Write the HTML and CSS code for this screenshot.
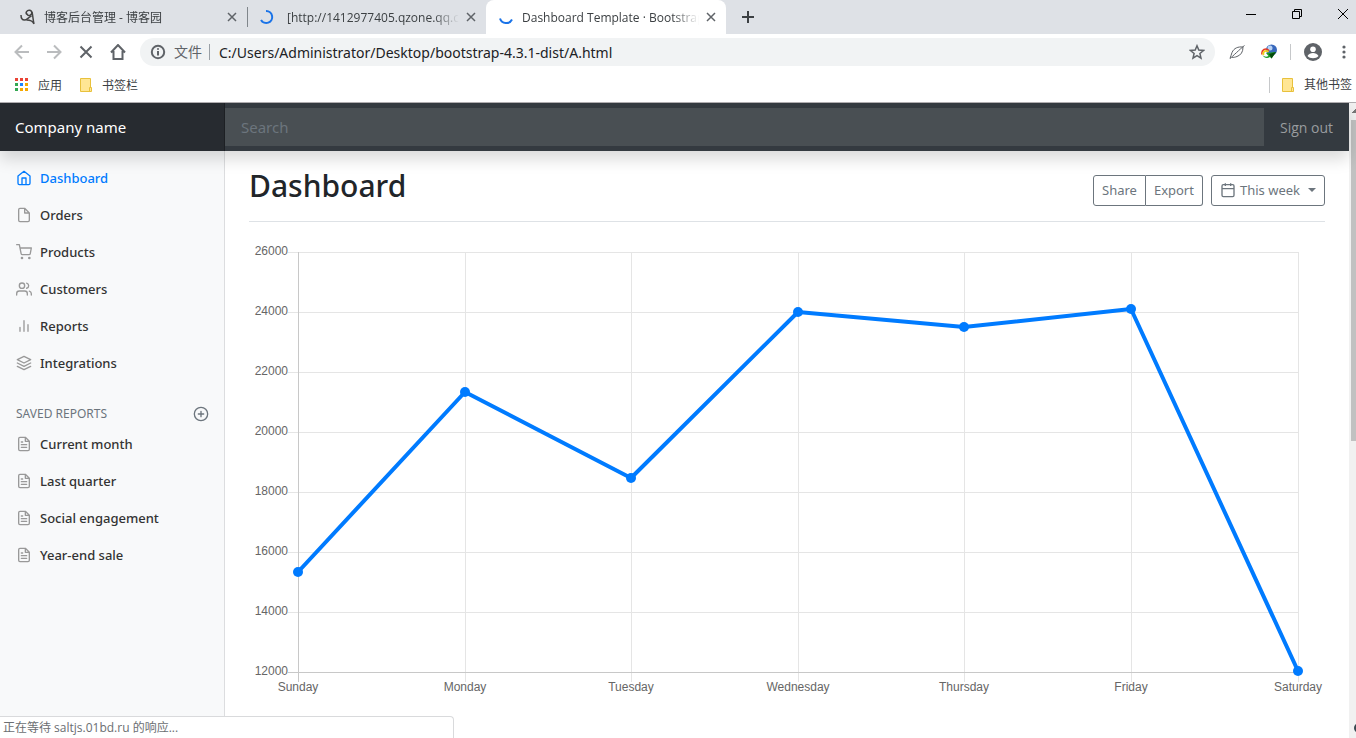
FILE: index.html
```html
<!DOCTYPE html>
<html lang="zh-CN">
<head>
<meta charset="utf-8">
<title>Dashboard Template · Bootstrap</title>
<link rel="stylesheet" href="styles.css">
</head>
<body>
<svg class="symbols" aria-hidden="true">
  <symbol id="close" viewBox="0 0 10 10"><path d="M1 1l8 8M9 1L1 9"/></symbol>
  <symbol id="file-text" viewBox="0 0 24 24"><path d="M14 2H6a2 2 0 0 0-2 2v16a2 2 0 0 0 2 2h12a2 2 0 0 0 2-2V8zM14 2v6h6M16 13H8M16 17H8M10 9H8"/></symbol>
  <symbol id="folder" viewBox="0 0 12 14"><path d="M.5.5h10v9h1v4H.5z" fill="#ffe694" stroke="#e8c13c"/><path d="M9.500 13v-3.500h1.500" fill="none" stroke="#e8c13c"/></symbol>
</svg>

<header class="browser">
  <div class="tab-strip">
    <div class="tab">
      <svg class="tab-icon favicon" viewBox="0 0 16 16"><path d="M1 6c0 3 1 5 3.500 5S8 8.500 11.500 7"/><path d="M7 5.500C5 4 7 1 9.500 1.300c3 .4 3 4 .5 5C8 7 7 6 7.500 4.500"/><path d="M12 3c1 4 1 8 2 12-1-3-4-4-7.500-4"/></svg>
      <button class="tab-title">博客后台管理 - 博客园</button>
      <button class="close" aria-label="关闭"><svg><use href="#close"/></svg></button>
    </div>
    <div class="tab divided">
      <svg class="tab-icon spinner" viewBox="0 0 16 16"><path d="M7 2a6 6 0 1 1-5 9"/></svg>
      <button class="tab-title">[http://1412977405.qzone.qq.com]</button>
      <button class="close" aria-label="关闭"><svg><use href="#close"/></svg></button>
    </div>
    <div class="tab active">
      <svg class="tab-icon spinner" viewBox="0 0 16 16"><path d="M2 9.500a6.500 6.500 0 0 0 12 1"/></svg>
      <button class="tab-title">Dashboard Template · Bootstrap</button>
      <button class="close" aria-label="关闭"><svg><use href="#close"/></svg></button>
    </div>
    <button class="new-tab" aria-label="新标签页"><svg viewBox="0 0 12 12"><path d="M6 0v12M0 6h12"/></svg></button>
    <div class="window-controls">
      <button aria-label="最小化"><svg viewBox="0 0 12 12"><path d="M1 6.500h10"/></svg></button>
      <button aria-label="还原"><svg viewBox="0 0 12 12"><path d="M1.500 3.500h7v7h-7zM3.500 3.500v-2h7v7h-2"/></svg></button>
      <button aria-label="关闭窗口"><svg viewBox="0 0 12 12"><path d="M1 1l10 10M11 1L1 11"/></svg></button>
    </div>
  </div>

  <div class="toolbar">
    <button class="dim" aria-label="后退"><svg viewBox="0 0 16 16"><path d="M15 8H2M8 1.500L1.500 8 8 14.500"/></svg></button>
    <button class="dim" aria-label="前进"><svg viewBox="0 0 16 16"><path d="M1 8h13M8 1.500L14.500 8 8 14.500"/></svg></button>
    <button aria-label="停止"><svg viewBox="0 0 16 16"><path d="M2.500 2.500l11 11M13.500 2.500l-11 11"/></svg></button>
    <button aria-label="主页"><svg viewBox="0 0 16 16"><path d="M1 8.500L8 1l7 7.500M3.500 7v8h9V7"/></svg></button>
    <div class="omnibox">
      <svg class="info" viewBox="0 0 16 16"><circle cx="8" cy="8" r="6.200"/><path d="M8 7v4.500M8 4.200v1.600"/></svg>
      <label class="scheme" for="url">文件</label>
      <input id="url" type="text" value="C:/Users/Administrator/Desktop/bootstrap-4.3.1-dist/A.html">
      <button class="star" aria-label="收藏"><svg viewBox="0 0 16 16"><path d="M8 1.800l1.800 4.300 4.700.4-3.600 3 1.100 4.600L8 11.700l-4 2.400 1.100-4.600-3.600-3 4.700-.4z"/></svg></button>
    </div>
    <div class="extensions">
      <button aria-label="羽毛"><svg viewBox="0 0 16 16" class="leaf"><path d="M1 14.500C3 13 11 5 15.500 1.500M1 14.500c1-2 1-4 2-6C5 4 9 2.500 14 3c0 5-2 8-6 9.500-2 .8-3.500 1-5 .8"/></svg></button>
      <button aria-label="下载管理器"><svg viewBox="0 0 16 16" class="idm"><circle cx="10.500" cy="6" r="5.500" fill="#3868bc"/><circle cx="9" cy="4" r="2.500" fill="#b8d2f4"/><path d="M1 10.500c-1-5 4-7 7-4" stroke="#e83a22" stroke-width="1.500" fill="none"/><path d="M2.500 11c-1-4 2.500-5 5-3" stroke="#f2cf18" stroke-width="1.800" fill="none"/><path d="M1.500 11c2 2 4 2 6 1l-2.500-3 10-1-4.500 6.500L9 13c-3 2-6 1-7.500-2z" fill="#1c9a26"/><path d="M8 10l7-2-4.500 6.500z" fill="#064a0c"/></svg></button>
      <span class="separator"></span>
      <button aria-label="用户"><svg viewBox="0 0 18 18" class="user"><circle cx="9" cy="9" r="9" fill="#5f6368"/><circle cx="9" cy="6.300" r="2.800" fill="#fff"/><path d="M3.500 13c2-4 9-4 11 0-2.500 3-8.500 3-11 0z" fill="#fff"/></svg></button>
      <button aria-label="菜单"><svg viewBox="0 0 4 14" class="dots"><circle cx="2" cy="2" r="1.600"/><circle cx="2" cy="7" r="1.600"/><circle cx="2" cy="12" r="1.600"/></svg></button>
    </div>
  </div>

  <nav class="bookmarks" aria-label="书签">
    <a href="#"><svg class="apps" viewBox="0 0 13 13"><path fill="#ea4335" d="M0 0h3v3H0zM5 0h3v3H5zM10 0h3v3h-3z"/><path fill="#34a853" d="M0 5h3v3H0zM0 10h3v3H0z"/><path fill="#1a84ff" d="M5 5h3v3H5z"/><path fill="#f5a800" d="M10 5h3v3h-3zM5 10h3v3H5zM10 10h3v3h-3z"/></svg>应用</a>
    <a href="#"><svg class="folder"><use href="#folder"/></svg>书签栏</a>
    <a href="#" class="others"><svg class="folder"><use href="#folder"/></svg>其他书签</a>
  </nav>
</header>

<div class="viewport">
  <div class="page">
    <nav class="navbar">
      <a class="brand" href="#">Company name</a>
      <input class="search" type="search" placeholder="Search" aria-label="Search">
      <a class="sign-out" href="#">Sign out</a>
    </nav>
    <div class="columns">
      <nav class="sidebar">
        <a class="nav-link current" href="#"><svg viewBox="0 0 24 24"><path d="M3 9l9-7 9 7v11a2 2 0 0 1-2 2H5a2 2 0 0 1-2-2zM9 22V12h6v10"/></svg>Dashboard</a>
        <a class="nav-link" href="#"><svg viewBox="0 0 24 24"><path d="M13 2H6a2 2 0 0 0-2 2v16a2 2 0 0 0 2 2h12a2 2 0 0 0 2-2V9zM13 2v7h7"/></svg>Orders</a>
        <a class="nav-link" href="#"><svg viewBox="0 0 24 24"><circle cx="9" cy="21" r="1"/><circle cx="20" cy="21" r="1"/><path d="M1 1h4l2.680 13.390a2 2 0 0 0 2 1.610h9.720a2 2 0 0 0 2-1.610L23 6H6"/></svg>Products</a>
        <a class="nav-link" href="#"><svg viewBox="0 0 24 24"><path d="M17 21v-2a4 4 0 0 0-4-4H5a4 4 0 0 0-4 4v2"/><circle cx="9" cy="7" r="4"/><path d="M23 21v-2a4 4 0 0 0-3-3.870M16 3.130a4 4 0 0 1 0 7.750"/></svg>Customers</a>
        <a class="nav-link" href="#"><svg viewBox="0 0 24 24"><path d="M18 20V10M12 20V4M6 20v-6"/></svg>Reports</a>
        <a class="nav-link" href="#"><svg viewBox="0 0 24 24"><path d="M12 2L2 7l10 5 10-5zM2 17l10 5 10-5M2 12l10 5 10-5"/></svg>Integrations</a>
        <h2 class="sidebar-heading">SAVED REPORTS
          <button aria-label="Add report"><svg viewBox="0 0 24 24"><circle cx="12" cy="12" r="10"/><path d="M12 8v8M8 12h8"/></svg></button>
        </h2>
        <a class="nav-link" href="#"><svg><use href="#file-text"/></svg>Current month</a>
        <a class="nav-link" href="#"><svg><use href="#file-text"/></svg>Last quarter</a>
        <a class="nav-link" href="#"><svg><use href="#file-text"/></svg>Social engagement</a>
        <a class="nav-link" href="#"><svg><use href="#file-text"/></svg>Year-end sale</a>
      </nav>
      <main class="main">
        <div class="heading">
          <h1>Dashboard</h1>
          <div class="actions">
            <div class="group">
              <button class="btn">Share</button>
              <button class="btn">Export</button>
            </div>
            <button class="btn dropdown"><svg viewBox="0 0 24 24"><rect x="3" y="4" width="18" height="18" rx="2"/><path d="M16 2v4M8 2v4M3 10h18"/></svg>This week<span class="caret"></span></button>
          </div>
        </div>
        <svg class="chart" viewBox="0 0 1076 460" role="img" aria-label="Weekly chart">
          <path class="grid" d="M39 14.500h1011M39 74.500h1011M39 134.500h1011M39 194.500h1011M39 254.500h1011M39 314.500h1011M39 374.500h1011"/>
          <path class="grid" d="M216.500 14v430M382.500 14v430M549.500 14v430M715.500 14v430M882.500 14v430M1049.500 14v430"/>
          <path class="axis" d="M39 434.500h1011M49.500 14v430"/>
          <g class="values">
            <text x="39" y="17">26000</text><text x="39" y="77">24000</text><text x="39" y="137">22000</text><text x="39" y="197">20000</text><text x="39" y="257">18000</text><text x="39" y="317">16000</text><text x="39" y="377">14000</text><text x="39" y="437">12000</text>
          </g>
          <g class="days">
            <text x="49" y="453">Sunday</text><text x="216" y="453">Monday</text><text x="382" y="453">Tuesday</text><text x="549" y="453">Wednesday</text><text x="715" y="453">Thursday</text><text x="882" y="453">Friday</text><text x="1049" y="453">Saturday</text>
          </g>
          <polyline class="series" points="49,334 216,154 382,240 549,74 715,89 882,71 1049,433"/>
          <g class="points"><circle cx="49" cy="334" r="5"/><circle cx="216" cy="154" r="5"/><circle cx="382" cy="240" r="5"/><circle cx="549" cy="74" r="5"/><circle cx="715" cy="89" r="5"/><circle cx="882" cy="71" r="5"/><circle cx="1049" cy="433" r="5"/></g>
        </svg>
      </main>
    </div>
  </div>
  <div class="scrollbar"><span class="arrow"></span><span class="thumb"></span></div>
  <span class="edge-badge"></span>
</div>
<div class="status">正在等待 saltjs.01bd.ru 的响应...</div>
</body>
</html>
```
FILE: styles.css
```css
* { box-sizing: border-box; }
body {
  margin: 0;
  height: 100vh;
  display: flex;
  flex-direction: column;
  overflow: hidden;
  background: #fff;
  color: #212529;
  font-family: "Noto Sans", "Noto Sans CJK SC", sans-serif;
}
button { border: 0; padding: 0; background: none; font: inherit; color: inherit; display: flex; align-items: center; justify-content: center; }
a { color: inherit; text-decoration: none; }
svg { display: block; flex: none; fill: none; stroke: currentColor; }
.symbols { position: absolute; width: 0; height: 0; }

/* Browser window */
.browser { flex: none; font-family: "Open Sans", "Noto Sans CJK SC", sans-serif; font-size: 12px; border-bottom: 1px solid #b0adb0; }
.tab-strip { display: flex; height: 34px; background: #dee1e6; }
.tab { display: flex; align-items: center; width: 240px; padding: 0 9px 0 20px; color: #3c4043; }
.tab:first-child { width: 247px; }
.tab.divided { padding-left: 12px; width: 239px; background: linear-gradient(#80868b, #80868b) left center / 1px 20px no-repeat; }
.tab.active { padding-left: 12px; background: #fff; border-radius: 8px 8px 0 0; }
.tab-icon { width: 16px; height: 16px; margin-right: 8px; }
.favicon { stroke-width: 1.5; color: #454545; }
.spinner { stroke-width: 2; color: #1a73e8; }
.divided .tab-icon { margin-right: 12px; }
.tab-title { flex: 1; min-width: 0; overflow: hidden; white-space: nowrap; justify-content: flex-start; -webkit-mask-image: linear-gradient(90deg, #000 85%, transparent); mask-image: linear-gradient(90deg, #000 85%, transparent); }
.close { width: 12px; height: 16px; margin-left: 6px; color: #5f6368; }
.close svg { width: 10px; height: 10px; stroke-width: 1.5; }
.new-tab { width: 44px; color: #3c4043; }
.new-tab svg { width: 12px; height: 12px; stroke-width: 2; }
.window-controls { display: flex; align-items: center; gap: 34px; margin-left: auto; padding: 0 7px 6px 0; color: #000; }
.window-controls svg { width: 12px; height: 12px; }

.toolbar { display: flex; align-items: center; height: 36px; padding: 0 10px 0 14px; gap: 16px; color: #5f6368; }
.toolbar svg { width: 16px; height: 16px; stroke-width: 2; }
.toolbar .dim { color: #babcbe; }
.omnibox { display: flex; align-items: center; flex: 1; height: 28px; margin-left: -2px; padding: 0 10px; border-radius: 14px; background: #f1f3f4; }
.omnibox .info { stroke-width: 2; margin-right: 8px; }
.scheme { font-size: 14px; padding-right: 7px; border-right: 1px solid #9aa0a6; line-height: 16px; }
.omnibox input { flex: 1; min-width: 0; border: 0; padding: 0 0 0 9px; background: none; color: #202124; font-family: "Noto Sans", sans-serif; font-size: 14px; outline: 0; }
.toolbar .star svg { stroke-width: 1.5; }
.extensions { display: flex; align-items: center; gap: 16px; margin-left: -2px; }
.toolbar .leaf { stroke-width: 1; }
.toolbar .idm { stroke: none; }
.toolbar .user { width: 18px; height: 18px; stroke: none; }
.toolbar .dots { width: 4px; height: 14px; fill: #5f6368; stroke: none; }
.extensions button:last-child { margin-left: 4px; }
.separator { width: 1px; height: 16px; background: #c6c8ca; margin: 0 -3px 0 -3px; }

.bookmarks { display: flex; align-items: center; height: 32px; padding: 0 4px 3px 15px; gap: 18px; color: #3c4043; }
.bookmarks a { display: flex; align-items: center; gap: 10px; }
.bookmarks svg { stroke: none; }
.apps { width: 13px; height: 13px; }
.folder { width: 12px; height: 14px; }
.others { margin-left: auto; padding-left: 12px; border-left: 1px solid #c6c8ca; line-height: 16px; }

/* Page */
.viewport { display: flex; flex: 1; min-height: 0; position: relative; overflow: hidden; }
.page { display: flex; flex-direction: column; flex: 1; min-width: 0; }
.navbar { display: grid; grid-template-columns: 225px 1fr auto; align-items: center; flex: none; background: #343a40; box-shadow: 0 8px 16px rgba(0, 0, 0, .15); z-index: 1; font-size: 15px; }
.brand { padding: 12px 15px; line-height: 24px; color: #fff; background: #272b30; box-shadow: inset -1px 0 0 rgba(0, 0, 0, .25); }
.search { height: 38px; border: 0; border-radius: 0; padding: 0 16px; margin: 0; background: #494f53; color: #fff; font: inherit; outline: 0; -webkit-appearance: none; appearance: none; }
.search::placeholder { color: #6c757d; }
.sign-out { padding: 0 16px; font-family: "Open Sans", sans-serif; font-size: 14px; color: #999c9f; }
.columns { display: grid; grid-template-columns: 225px 1fr; flex: 1; min-height: 0; }
.sidebar { padding-top: 8px; background: #f8f9fa; border-right: 1px solid #dcdddf; }
.nav-link { display: flex; align-items: center; gap: 8px; height: 37px; padding: 0 16px; font-size: 13px; font-weight: 500; color: #333; }
.sidebar svg { width: 16px; height: 16px; stroke-width: 2; stroke-linecap: round; stroke-linejoin: round; }
.nav-link svg { color: #999; }
.nav-link.current, .nav-link.current svg { color: #007bff; }
.sidebar-heading { display: flex; justify-content: space-between; align-items: center; margin: 24px 0 3px; padding: 0 15px 0 16px; line-height: 17px; font-size: 12px; font-weight: 400; color: #6c757d; }

.main { padding: 16px 24px 0; min-width: 0; }
.heading { display: flex; justify-content: space-between; align-items: center; padding-bottom: 8px; margin-bottom: 16px; border-bottom: 1px solid #dee2e6; }
.heading h1 { margin: 0 0 8px; font-size: 30px; font-weight: 500; line-height: 38px; }
.actions { display: flex; gap: 8px; }
.group { display: flex; }
.btn { height: 31px; padding: 0 8px; border: 1px solid #6c757d; border-radius: 3px; color: #6c757d; font-size: 13px; }
.group .btn:first-child { border-radius: 3px 0 0 3px; }
.group .btn:last-child { border-radius: 0 3px 3px 0; border-left: 0; }
.btn svg { width: 16px; height: 16px; margin-right: 4px; stroke-width: 2; }
.caret { margin-left: 8px; border: 4px solid transparent; border-top-color: #6c757d; border-bottom: 0; }

.chart { width: 100%; height: auto; }
.grid { stroke: #e5e5e5; }
.axis { stroke: #c8c8c8; }
.chart text { fill: #666; stroke: none; font-family: "Liberation Sans", Arial, sans-serif; font-size: 12px; }
.values text { text-anchor: end; }
.days text { text-anchor: middle; }
.series { stroke: #007bff; stroke-width: 4; stroke-linejoin: round; }
.points { fill: #007bff; stroke: none; }

.scrollbar { width: 7px; flex: none; background: #f1f1f1; padding: 6px 0 0 2px; }
.arrow { display: block; width: 5px; height: 4px; margin-bottom: 7px; background: linear-gradient(135deg, transparent 50%, #777 50%); }
.thumb { display: block; height: 51%; background: #c1c1c1; }
.edge-badge { position: absolute; right: -8px; bottom: 5px; width: 10px; height: 10px; border-radius: 5px; background: #37474f; }
.status { position: fixed; left: 0; bottom: 0; z-index: 2; width: 454px; height: 22px; padding-left: 3px; line-height: 21px; background: #fff; border: 1px solid #d9dadc; border-left: 0; border-bottom: 0; border-radius: 0 4px 0 0; color: #6b6e72; font-family: "Open Sans", "Noto Sans CJK SC", sans-serif; font-size: 12px; }
```
